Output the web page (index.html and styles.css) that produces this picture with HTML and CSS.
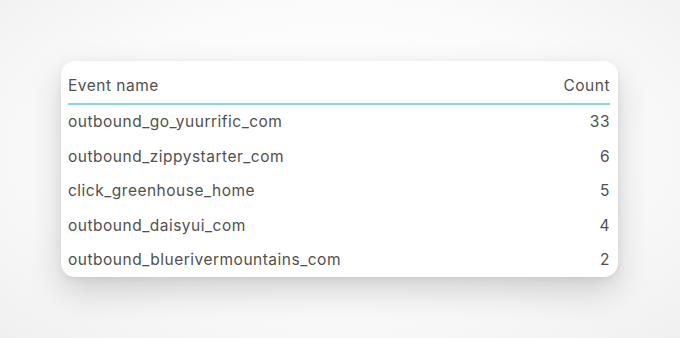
FILE: index.html
```html
<!DOCTYPE html>
<html>
<head>
<meta charset="utf-8">
<link rel="stylesheet" href="styles.css">
</head>
<body>
<div class="stage">
  <div class="card">
    <table class="events">
      <thead>
        <tr><th class="name">Event name</th><th class="count">Count</th></tr>
      </thead>
      <tbody>
        <tr><td class="name">outbound_go_yuurrific_com</td><td class="count">33</td></tr>
        <tr><td class="name">outbound_zippystarter_com</td><td class="count">6</td></tr>
        <tr><td class="name">click_greenhouse_home</td><td class="count">5</td></tr>
        <tr><td class="name">outbound_daisyui_com</td><td class="count">4</td></tr>
        <tr><td class="name">outbound_bluerivermountains_com</td><td class="count">2</td></tr>
      </tbody>
    </table>
  </div>
</div>
</body>
</html>
```
FILE: styles.css
```css
html, body {
  margin: 0;
  padding: 0;
}
body {
  width: 680px;
  height: 338px;
  overflow: hidden;
  background: radial-gradient(ellipse at 50% 45%, #ffffff 0%, #fbfbfb 55%, #f0f0f0 100%);
  font-family: Inter, "Noto Sans", sans-serif;
  color: #505050;
}
.stage {
  padding: 61px 62px 0 61px;
}
.card {
  width: 557px;
  height: 216px;
  box-sizing: border-box;
  background: #ffffff;
  border-radius: 14px;
  padding: 8px 8px 0 7px;
  box-shadow: 0 14px 34px rgba(0, 0, 0, 0.17), 0 3px 8px rgba(0, 0, 0, 0.06);
}
.events {
  width: 100%;
  border-collapse: collapse;
  font-size: 15.5px;
  letter-spacing: 0.5px;
  line-height: 20px;
}
.events th {
  font-weight: 400;
  height: 34px;
  padding: 0;
  border-bottom: 2px solid #80d6ea;
  vertical-align: middle;
}
.events td {
  height: 34.5px;
  padding: 0;
  vertical-align: middle;
}
.name { text-align: left; }
.count { text-align: right; }
```
